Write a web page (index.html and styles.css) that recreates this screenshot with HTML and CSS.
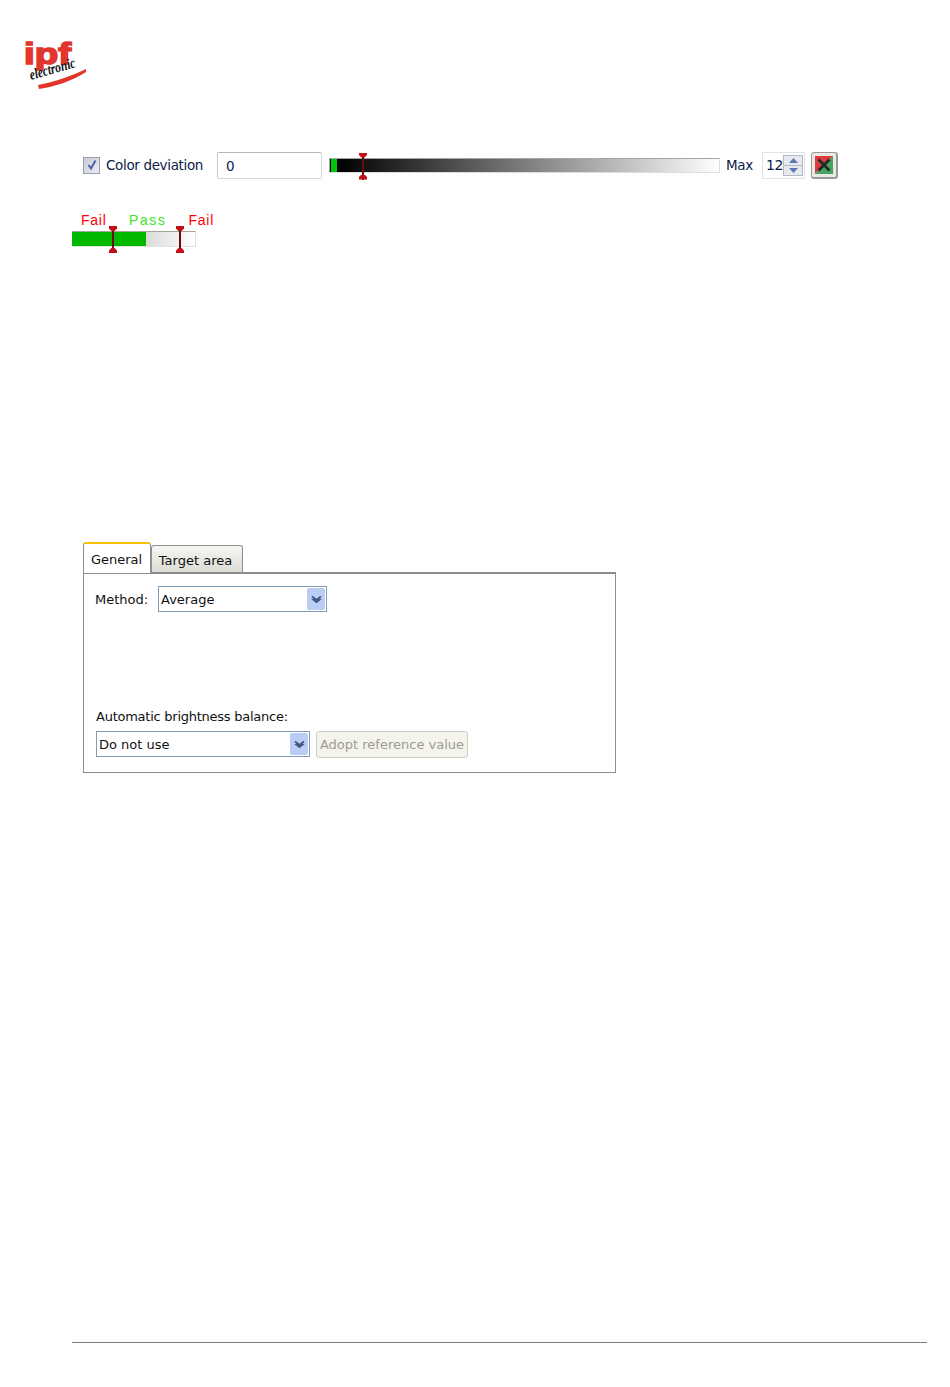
FILE: index.html
```html
<!DOCTYPE html>
<html lang="en">
<head>
<meta charset="utf-8">
<title>Color deviation</title>
<link rel="stylesheet" href="styles.css">
</head>
<body>
<div class="page">
  <header class="logo">
    <svg class="logo-svg" width="66" height="50" viewBox="0 0 66 50" aria-label="ipf electronic">
      <path d="M14 45 C30 42 48 36 62 29 L62 32 C48 41 30 47 15 49 Z" fill="#e2352b"/>
      <text x="0" y="24" class="logo-ipf" textLength="47" lengthAdjust="spacingAndGlyphs">ipf</text>
      <text x="0" y="0" class="logo-sub" transform="translate(7 40) rotate(-16)" textLength="47" lengthAdjust="spacingAndGlyphs">electronic</text>
    </svg>
  </header>

  <section class="deviation">
    <span class="check" aria-hidden="true">
      <svg width="12" height="12" viewBox="0 0 12 12"><path d="M2.5 6 L5 9.5 L9.5 1.5" fill="none" stroke="#4a60ae" stroke-width="2"/></svg>
    </span>
    <span class="dev-label">Color deviation</span>
    <div class="value-box">0</div>
    <div class="track">
      <span class="track-green"></span>
      <span class="thumb thumb-main"></span>
    </div>
    <span class="max-label">Max</span>
    <div class="spin">
      <span class="spin-value">12</span>
      <span class="spin-btns">
        <span class="spin-btn"><svg width="9" height="5" viewBox="0 0 9 5"><path d="M4.5 0 L9 5 H0 Z" fill="#5b78b8"/></svg></span>
        <span class="spin-btn"><svg width="9" height="5" viewBox="0 0 9 5"><path d="M0 0 H9 L4.5 5 Z" fill="#5b78b8"/></svg></span>
      </span>
    </div>
    <button class="color-btn" aria-label="Pick color">
      <svg width="18" height="18" viewBox="0 0 18 18">
        <path d="M0 0 H18 L0 18 Z" fill="#de3a3c"/>
        <path d="M18 0 V18 H0 Z" fill="#4a9f62"/>
        <path d="M3.5 3.5 L14.5 14.5 M14.5 3.5 L3.5 14.5" stroke="#1c2b22" stroke-width="2.8"/>
      </svg>
    </button>
  </section>

  <section class="passfail">
    <div class="pf-labels">
      <span class="fail">Fail</span>
      <span class="pass">Pass</span>
      <span class="fail">Fail</span>
    </div>
    <div class="pf-bar">
      <span class="pf-green"></span>
      <span class="thumb thumb-a"></span>
      <span class="thumb thumb-b"></span>
    </div>
  </section>

  <section class="dialog">
    <div class="tabs">
      <div class="tab tab-active">General</div>
      <div class="tab">Target area</div>
    </div>
    <div class="panel">
      <div class="method-row">
        <span class="method-label">Method:</span>
        <div class="select select-method">
          <span class="select-text">Average</span>
          <span class="select-arrow"><svg width="11" height="8" viewBox="0 0 11 8"><path d="M1 1.5 L5.5 5 L10 1.5 M1 3.5 L5.5 7 L10 3.5" fill="none" stroke="#3f5a86" stroke-width="2"/></svg></span>
        </div>
      </div>
      <div class="auto-label">Automatic brightness balance:</div>
      <div class="auto-row">
        <div class="select select-auto">
          <span class="select-text">Do not use</span>
          <span class="select-arrow"><svg width="11" height="8" viewBox="0 0 11 8"><path d="M1 1.5 L5.5 5 L10 1.5 M1 3.5 L5.5 7 L10 3.5" fill="none" stroke="#3f5a86" stroke-width="2"/></svg></span>
        </div>
        <button class="adopt" disabled>Adopt reference value</button>
      </div>
    </div>
  </section>

  <footer class="rule"></footer>
</div>
</body>
</html>
```

FILE: styles.css
```css
* { box-sizing: border-box; }
html, body { margin: 0; padding: 0; background: #fff; }
body { font-family: "DejaVu Sans", sans-serif; color: #111; }
.page { width: 950px; height: 1387px; display: flex; flex-direction: column; overflow: hidden; }

.logo { height: 50px; margin: 40px 0 0 24px; }
.logo-svg { display: block; overflow: visible; }
.logo-ipf { font: 700 30px "Liberation Sans", sans-serif; fill: #e2352b; stroke: #e2352b; stroke-width: 1.6px; }
.logo-sub { font: italic 700 15px "Liberation Serif", serif; fill: #111; }

.deviation { display: flex; align-items: center; height: 28px; margin: 61px 0 0 83px; }
.check { width: 17px; height: 17px; border: 1px solid #9a9ea8; background: linear-gradient(135deg, #c9cbd6, #eceef2); display: flex; align-items: center; justify-content: center; }
.dev-label { margin-left: 6px; width: 111px; font-size: 13.5px; letter-spacing: -.35px; color: #0c1a4a; }
.value-box { width: 105px; height: 27px; border: 1px solid #d3d7e2; border-top-color: #b8b8b8; border-left-color: #c8c8c8; border-radius: 2px; padding: 5px 0 0 8px; font-size: 13.5px; color: #0c1a4a; }
.track { position: relative; width: 391px; height: 15px; margin-left: 7px; border-top: 1px solid #a6a6a6; border-left: 1px solid #a6a6a6; border-right: 1px solid #dcdcdc; border-bottom: 1px solid #dcdcdc; background: linear-gradient(90deg, #000 2%, #fff 100%); }
.track-green { position: absolute; left: 1px; top: 0; bottom: 0; width: 6px; background: #00c80a; }
.max-label { margin-left: 6px; width: 36px; font-size: 13.5px; letter-spacing: -.3px; color: #0c1a4a; }
.spin { display: flex; align-items: center; width: 43px; height: 27px; border: 1px solid #dfe2ea; padding: 0 1px 0 3px; }
.spin-value { flex: 1; font-size: 14px; color: #0c1a4a; letter-spacing: -.5px; }
.spin-btns { display: flex; flex-direction: column; width: 20px; height: 21px; border: 1px solid #b4b8c2; }
.spin-btn { flex: 1; display: flex; align-items: center; justify-content: center; background: #e7e9ef; border-bottom: 1px solid #b4b8c2; }
.spin-btn:last-child { border-bottom: 0; }
.color-btn { width: 27px; height: 27px; margin-left: 6px; padding: 0; display: flex; align-items: center; justify-content: center; border: 1px solid #9a9a9a; border-right-width: 2px; border-bottom-width: 2px; border-radius: 3px; background: #e9e9e4; }

.thumb { position: absolute; width: 1.5px; background: #6d0c10; }
.thumb::before, .thumb::after { content: ""; position: absolute; left: -3px; width: 8px; height: 5px; background: #c40f18; }
.thumb::before { top: 0; clip-path: polygon(0 0, 100% 0, 100% 50%, 70% 100%, 30% 100%, 0 50%); }
.thumb::after { bottom: 0; clip-path: polygon(30% 0, 70% 0, 100% 50%, 100% 100%, 0 100%, 0 50%); }
.thumb-main { left: 32px; top: -6px; height: 27px; }

.passfail { margin: 33px 0 0 72px; width: 142px; }
.pf-labels { display: flex; justify-content: space-between; height: 20px; padding-left: 9px; font-size: 14px; letter-spacing: .75px; font-family: "Liberation Sans", sans-serif; line-height: 17px; }
.fail { color: #f00; }
.pass { color: #3fe52a; font-size: 14.5px; letter-spacing: 1.3px; }
.pf-bar { position: relative; width: 124px; height: 16px; border-top: 1px solid #a8a49a; border-right: 1px solid #e2e2e2; border-bottom: 1px solid #e2e2e2; background: linear-gradient(90deg, #d0d0d0 50%, #fff 100%); margin-top: -1px; }
.pf-green { position: absolute; left: 0; top: 0; bottom: 0; width: 74px; background: #00b800; }
.thumb-a { left: 40px; top: -6px; height: 27px; }
.thumb-b { left: 107px; top: -6px; height: 27px; }

.dialog { margin: 294px 0 0 83px; width: 533px; font-family: "DejaVu Sans", sans-serif; font-size: 13px; }
.tabs { display: flex; align-items: flex-end; height: 31px; }
.tab { height: 27px; width: 92px; padding-top: 7px; padding-right: 3px; text-align: center; letter-spacing: 0; border: 1px solid #8f8f8f; border-bottom: 0; border-radius: 3px 3px 0 0; background: linear-gradient(#f6f6f2, #dcdcd6); }
.tab-active { height: 31px; width: 68px; padding-top: 8px; padding-right: 1px; background: #fff; border-color: #8f8f8f; border-top: 2px solid #f5c000; position: relative; margin-bottom: -1px; z-index: 1; }
.panel { height: 201px; border: 1px solid #8c8c8c; border-top: 2px solid #8c8c8c; padding: 12px 0 0 11px; }
.method-row { display: flex; align-items: center; height: 26px; }
.method-label { width: 63px; }
.select { display: flex; align-items: center; height: 26px; border: 1px solid #7f9db9; background: #fff; padding: 0 1px 0 2px; }
.select-method { width: 169px; }
.select-auto { width: 214px; }
.select-text { flex: 1; }
.select-arrow { width: 18px; height: 22px; display: flex; align-items: center; justify-content: center; background: #bccdf5; border-radius: 2px; }
.auto-label { margin: 95px 0 0 1px; height: 24px; line-height: 19px; letter-spacing: -.25px; }
.auto-row { display: flex; margin-left: 1px; }
.adopt { width: 152px; height: 27px; margin-left: 6px; padding: 0; font: inherit; color: #9c9c92; background: #f4f3ec; border: 1px solid #cfcdbf; border-radius: 3px; }

.rule { margin: 569px 23px 0 72px; height: 1px; background: #7d7d7d; }
```
